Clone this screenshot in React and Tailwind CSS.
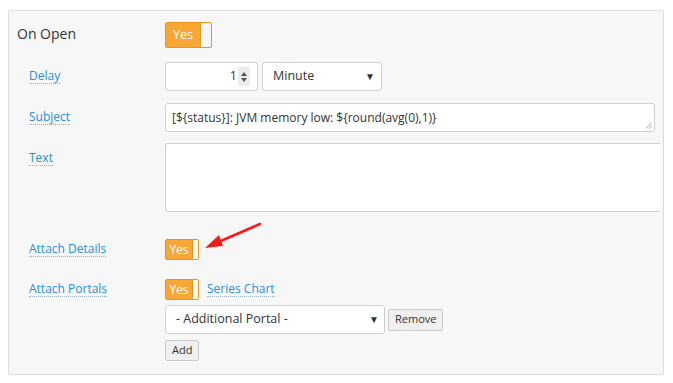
import React from 'react';

const font = { fontFamily: '"Open Sans", "Liberation Sans", sans-serif' };

function Toggle({ big }) {
  return (
    <div
      className={`flex items-stretch bg-[#f8a636] border border-[#e8941f] rounded-[2px] overflow-hidden ${big ? 'w-[47px] h-[26px]' : 'w-[34px] h-[21px]'}`}
    >
      <div className={`flex-1 flex items-center justify-center text-white ${big ? 'text-[12.5px]' : 'text-[12px]'}`}>Yes</div>
      <div className={`bg-[#f7f7f7] border-l border-[#e8941f] ${big ? 'w-[11px]' : 'w-[6px]'}`} />
    </div>
  );
}

function Label({ children }) {
  return (
    <span className="text-[12px] text-[#1f8fd8] border-b border-dotted border-[#9ab] leading-[14px]">{children}</span>
  );
}

function Row({ label, top, children, className = '' }) {
  return (
    <div className={`flex ${className}`}>
      <div className={`w-[136px] shrink-0 flex ${top ? 'items-start pt-[8px]' : 'items-center'}`}>
        <Label>{label}</Label>
      </div>
      {children}
    </div>
  );
}

function Arrow() {
  return (
    <svg className="absolute left-[200px] top-[218px]" width="66" height="36" viewBox="0 0 66 36">
      <line x1="60" y1="6" x2="14" y2="26" stroke="#ee1c1c" strokeWidth="2.6" strokeLinecap="round" />
      <polygon points="5,30 19,17 23,28" fill="#ee1c1c" />
    </svg>
  );
}

export default function App() {
  return (
    <div className="w-[673px] h-[383px] bg-white pt-[10px] pl-[8px] relative text-[#333]" style={font}>
      <div className="w-[656px] h-[365px] bg-[#f7f7f7] border border-[#dcdcdc] rounded-[2px] pt-[11px] overflow-hidden">
        {/* On Open */}
        <div className="flex items-center">
          <div className="w-[156px] pl-[8px] text-[14px] leading-[22px] -mt-[2px]">On Open</div>
          <Toggle big />
        </div>

        <div className="pl-[20px]">
          {/* Delay */}
          <Row label="Delay" className="mt-[14px]">
            <div className="flex gap-[4px]">
              <div className="w-[93px] h-[29px] bg-white border border-[#cfcfcf] rounded-[3px] flex items-center justify-end pr-[7px] text-[12.5px]">
                <span className="mr-[1px]">1</span>
                <div className="w-[12px] h-[19px] bg-[#ececec] flex flex-col items-center justify-center gap-[2px] text-[#555]">
                  <div className="w-0 h-0 border-l-[3.5px] border-r-[3.5px] border-b-[4px] border-l-transparent border-r-transparent border-b-[#555]" />
                  <div className="w-0 h-0 border-l-[3.5px] border-r-[3.5px] border-t-[4px] border-l-transparent border-r-transparent border-t-[#555]" />
                </div>
              </div>
              <div className="w-[120px] h-[29px] bg-white border border-[#cfcfcf] rounded-[3px] flex items-center justify-between pl-[10px] pr-[6px] text-[12.5px]">
                <span>Minute</span>
                <span className="text-[10px]">▼</span>
              </div>
            </div>
          </Row>

          {/* Subject */}
          <Row label="Subject" className="mt-[12px]">
            <div className="relative w-[490px] h-[29px] bg-white border border-[#cfcfcf] rounded-[3px] flex items-center pl-[6px] text-[12px]">
              [${'{'}status{'}'}]: JVM memory low: ${'{'}round(avg(0),1){'}'}
              <svg className="absolute right-[2px] bottom-[2px]" width="7" height="7" viewBox="0 0 7 7">
                <line x1="1" y1="6.5" x2="6.5" y2="1" stroke="#888" strokeWidth="0.8" />
                <line x1="4" y1="6.5" x2="6.5" y2="4" stroke="#888" strokeWidth="0.8" />
              </svg>
            </div>
          </Row>

          {/* Text */}
          <Row label="Text" top className="mt-[11px]">
            <div className="w-[495px] h-[69px] bg-white border border-r-0 border-[#cfcfcf] rounded-l-[3px]" />
          </Row>

          {/* Attach Details */}
          <Row label="Attach Details" className="mt-[27px]">
            <Toggle />
          </Row>

          {/* Attach Portals */}
          <Row label="Attach Portals" className="mt-[19px]">
            <div className="flex items-center gap-[8px]">
              <Toggle />
              <Label>Series Chart</Label>
            </div>
          </Row>
          <div className="pl-[136px] mt-[5px] flex items-center gap-[3px]">
            <div className="w-[220px] h-[29px] bg-white border border-[#cfcfcf] rounded-[3px] flex items-center justify-between pl-[10px] pr-[5px] text-[12.5px]">
              <span>- Additional Portal -</span>
              <span className="text-[10px]">▼</span>
            </div>
            <div className="h-[22px] px-[6px] bg-[#f0f0f0] border border-[#ccc] rounded-[2px] flex items-center text-[11px]">Remove</div>
          </div>
          <div className="pl-[136px] mt-[6px] flex">
            <div className="flex h-[21px] px-[6px] bg-[#f0f0f0] border border-[#ccc] rounded-[2px] items-center text-[11px]">Add</div>
          </div>
        </div>
      </div>
      <Arrow />
    </div>
  );
}
